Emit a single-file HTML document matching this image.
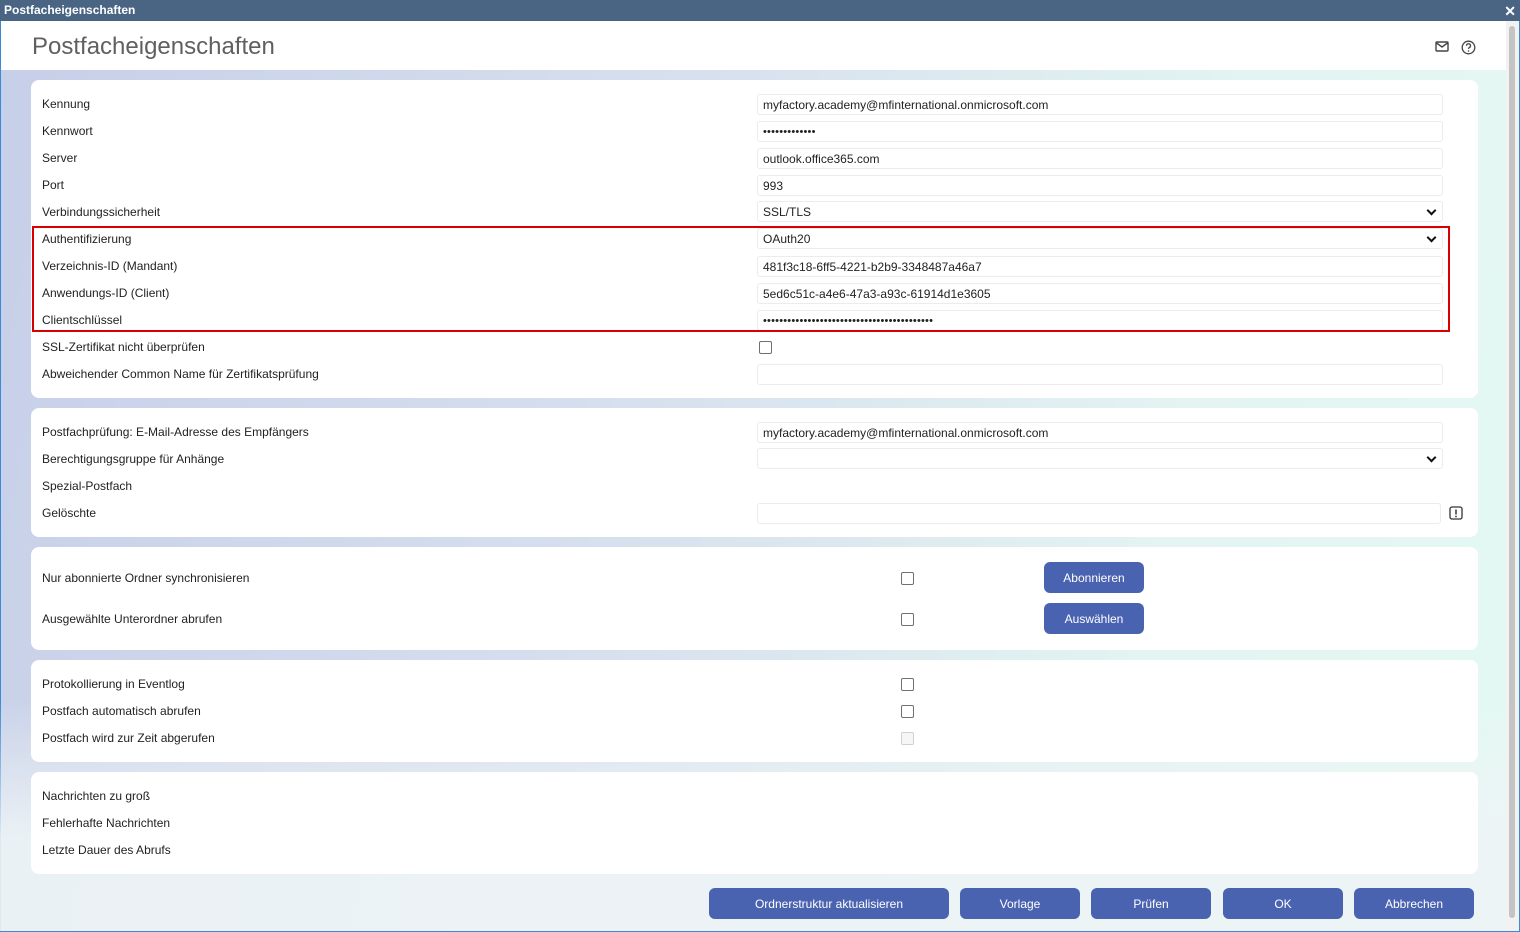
<!DOCTYPE html>
<html><head><meta charset="utf-8"><style>
*{margin:0;padding:0;box-sizing:border-box}
body{width:1520px;height:932px;overflow:hidden;font-family:"Liberation Sans",Arial,sans-serif;font-size:12px;color:#222;position:relative;background:#fff}
.win{position:absolute;left:0;top:0;width:1520px;height:932px;border:1px solid #3a8ad4;background:linear-gradient(100deg,#c6cfe8 0%,#d6dfee 40%,#e3f4f2 75%,#e4f9f3 100%)}
.bg2{position:absolute;left:0;top:700px;width:1506px;height:231px;background:linear-gradient(180deg,rgba(238,244,246,0) 0%,rgba(238,244,246,.9) 60%)}
.tb{position:absolute;left:0;top:0;width:1520px;height:21px;background:#4a6584;color:#fff;font-weight:bold;font-size:12px;line-height:21px;padding-left:4px}
.x{position:absolute;right:4px;top:0;color:#fff;font-weight:bold;font-size:14px;line-height:22px}
.hd{position:absolute;left:1px;top:21px;width:1505px;height:49px;background:#fff}
.h1{position:absolute;left:32px;top:33px;font-size:24px;color:#606060}
.sb{position:absolute;left:1506px;top:21px;width:13px;height:910px;background:#f2f2f2}
.sb i{position:absolute;left:3px;top:5px;width:6px;height:892px;background:#c4c4c4;border-radius:3px}
.p{position:absolute;left:31px;width:1447px;background:#fff;border-radius:8px}
.l{position:absolute;left:42px;line-height:16px;white-space:nowrap}
.in{position:absolute;left:757px;width:686px;height:21px;border:1px solid #ececec;border-radius:3px;background:#fff;line-height:20px;padding-left:5px;white-space:nowrap}
.sel::after{content:"";position:absolute;right:7px;top:5px;width:5px;height:5px;border-right:2px solid #111;border-bottom:2px solid #111;transform:rotate(45deg)}
.cb{position:absolute;width:13px;height:13px;border:1px solid #707070;border-radius:2px;background:#fff}
.bt{position:absolute;height:31px;background:#4a63b0;color:#fff;border-radius:6px;text-align:center;line-height:32px;font-size:12px}
.red{position:absolute;left:32px;top:226px;width:1418px;height:106px;border:2px solid #d90000}
.dots{font-size:11px;letter-spacing:0.2px}
</style></head><body>
<div class="win"></div><div class="bg2"></div>
<div class="tb">Postfacheigenschaften<span class="x">✕</span></div>
<div class="hd"></div>
<div class="h1">Postfacheigenschaften</div>
<svg style="position:absolute;left:1435px;top:41px" width="14" height="11" viewBox="0 0 14 11"><rect x="1" y="1" width="12" height="9" rx="1" fill="none" stroke="#444" stroke-width="1.4"/><path d="M1.5 2 L7 6 L12.5 2" fill="none" stroke="#444" stroke-width="1.4"/></svg>
<svg style="position:absolute;left:1461px;top:40px" width="15" height="15" viewBox="0 0 15 15"><circle cx="7.5" cy="7.5" r="6.3" fill="none" stroke="#444" stroke-width="1.3"/><path d="M5.5 5.8a2 2 0 1 1 2.8 1.8c-.6.3-.8.7-.8 1.3" fill="none" stroke="#444" stroke-width="1.3"/><circle cx="7.5" cy="11" r=".8" fill="#444"/></svg>
<div class="sb"><i></i></div>

<div class="p" style="top:80px;height:318px"></div>
<div class="p" style="top:408px;height:129px"></div>
<div class="p" style="top:547px;height:103px"></div>
<div class="p" style="top:660px;height:102px"></div>
<div class="p" style="top:772px;height:102px"></div>

<div class="l" style="top:96px">Kennung</div>
<div class="l" style="top:123px">Kennwort</div>
<div class="l" style="top:150px">Server</div>
<div class="l" style="top:177px">Port</div>
<div class="l" style="top:204px">Verbindungssicherheit</div>
<div class="l" style="top:231px">Authentifizierung</div>
<div class="l" style="top:258px">Verzeichnis-ID (Mandant)</div>
<div class="l" style="top:285px">Anwendungs-ID (Client)</div>
<div class="l" style="top:312px">Clientschlüssel</div>
<div class="l" style="top:339px">SSL-Zertifikat nicht überprüfen</div>
<div class="l" style="top:366px">Abweichender Common Name für Zertifikatsprüfung</div>

<div class="in" style="top:94px">myfactory.academy@mfinternational.onmicrosoft.com</div>
<div class="in dots" style="top:121px">•••••••••••••</div>
<div class="in" style="top:148px">outlook.office365.com</div>
<div class="in" style="top:175px">993</div>
<div class="in sel" style="top:201px">SSL/TLS</div>
<div class="in sel" style="top:228px">OAuth20</div>
<div class="in" style="top:256px">481f3c18-6ff5-4221-b2b9-3348487a46a7</div>
<div class="in" style="top:283px">5ed6c51c-a4e6-47a3-a93c-61914d1e3605</div>
<div class="in dots" style="top:310px">••••••••••••••••••••••••••••••••••••••••••</div>
<div class="cb" style="left:759px;top:341px"></div>
<div class="in" style="top:364px"></div>
<div class="red"></div>

<div class="l" style="top:424px">Postfachprüfung: E-Mail-Adresse des Empfängers</div>
<div class="l" style="top:451px">Berechtigungsgruppe für Anhänge</div>
<div class="l" style="top:478px">Spezial-Postfach</div>
<div class="l" style="top:505px">Gelöschte</div>
<div class="in" style="top:422px">myfactory.academy@mfinternational.onmicrosoft.com</div>
<div class="in sel" style="top:448px"></div>
<div class="in" style="top:503px;width:684px"></div>
<svg style="position:absolute;left:1449px;top:506px" width="14" height="14" viewBox="0 0 14 14"><rect x="1" y="1" width="12" height="12" rx="2" fill="none" stroke="#333" stroke-width="1.3"/><path d="M7 3.5v5" stroke="#333" stroke-width="1.5"/><circle cx="7" cy="10.5" r=".9" fill="#333"/></svg>

<div class="l" style="top:570px">Nur abonnierte Ordner synchronisieren</div>
<div class="l" style="top:611px">Ausgewählte Unterordner abrufen</div>
<div class="cb" style="left:901px;top:572px"></div>
<div class="cb" style="left:901px;top:613px"></div>
<div class="bt" style="left:1044px;top:562px;width:100px">Abonnieren</div>
<div class="bt" style="left:1044px;top:603px;width:100px">Auswählen</div>

<div class="l" style="top:676px">Protokollierung in Eventlog</div>
<div class="l" style="top:703px">Postfach automatisch abrufen</div>
<div class="l" style="top:730px">Postfach wird zur Zeit abgerufen</div>
<div class="cb" style="left:901px;top:678px"></div>
<div class="cb" style="left:901px;top:705px"></div>
<div class="cb" style="left:901px;top:732px;border-color:#d0d0d0;background:#f6f6f6"></div>

<div class="l" style="top:788px">Nachrichten zu groß</div>
<div class="l" style="top:815px">Fehlerhafte Nachrichten</div>
<div class="l" style="top:842px">Letzte Dauer des Abrufs</div>

<div class="bt" style="left:709px;top:888px;width:240px">Ordnerstruktur aktualisieren</div>
<div class="bt" style="left:960px;top:888px;width:120px">Vorlage</div>
<div class="bt" style="left:1091px;top:888px;width:120px">Prüfen</div>
<div class="bt" style="left:1223px;top:888px;width:120px">OK</div>
<div class="bt" style="left:1354px;top:888px;width:120px">Abbrechen</div>
</body></html>
